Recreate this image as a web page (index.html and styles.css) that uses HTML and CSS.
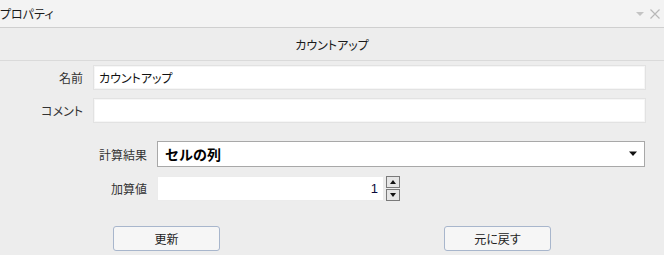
FILE: index.html
```html
<!DOCTYPE html>
<html lang="ja">
<head>
<meta charset="utf-8">
<link rel="stylesheet" href="styles.css">
</head>
<body>
<div class="panel">
  <div class="titlebar">
    <span class="title">プロパティ</span>
    <span class="tools">
      <svg width="10" height="8" viewBox="0 0 10 8"><path d="M1 2 L9 2 L5 6 Z" fill="#c4c4c4"/></svg>
      <svg width="12" height="12" viewBox="0 0 12 12"><path d="M1.5 1.5 L10.5 10.5 M10.5 1.5 L1.5 10.5" stroke="#b8b8b8" stroke-width="1.2"/></svg>
    </span>
  </div>
  <div class="body">
    <div class="header">カウントアップ</div>
    <div class="form1">
      <label class="lbl">名前</label>
      <div class="input">カウントアップ</div>
      <label class="lbl">コメント</label>
      <div class="input"></div>
    </div>
    <div class="form2">
      <label class="lbl">計算結果</label>
      <div class="select"><span>セルの列</span>
        <svg width="10" height="6" viewBox="0 0 10 6"><path d="M1 0.5 L9 0.5 L5 5 Z" fill="#111"/></svg>
      </div>
      <label class="lbl">加算値</label>
      <div class="spinrow">
        <div class="spin">1</div>
        <div class="spinbtns">
          <div class="sb"><svg width="6" height="4" viewBox="0 0 6 4"><path d="M0 4 L6 4 L3 0 Z" fill="#111"/></svg></div>
          <div class="sb"><svg width="6" height="4" viewBox="0 0 6 4"><path d="M0 0 L6 0 L3 4 Z" fill="#111"/></svg></div>
        </div>
      </div>
    </div>
    <div class="buttons">
      <button class="btn">更新</button>
      <button class="btn">元に戻す</button>
    </div>
  </div>
</div>
</body>
</html>
```
FILE: styles.css
```css
html, body { margin: 0; padding: 0; }
body {
  width: 664px; height: 255px; overflow: hidden;
  background: #ededed;
  font-family: "Noto Sans CJK JP", "Noto Sans", sans-serif;
  font-feature-settings: "palt";
  font-size: 12px; color: #222;
}
.titlebar {
  height: 28px; box-sizing: border-box;
  background: #f3f3f3;
  border-bottom: 1px solid #cfcfcf;
  display: flex; align-items: center; justify-content: space-between;
}
.title { font-size: 12px; color: #1a1a1a; }
.tools { display: flex; align-items: center; gap: 4px; padding-right: 3px; }
.body { background: #ededed; }
.header {
  height: 33px; box-sizing: border-box;
  display: flex; align-items: center; justify-content: center;
  border-bottom: 1px solid #dadada;
  font-size: 12px; color: #1a1a1a;
}
.form1 {
  display: grid;
  grid-template-columns: 83px 553px;
  column-gap: 10px;
  row-gap: 8px;
  padding-top: 4px;
}
.lbl { display: flex; align-items: center; justify-content: flex-end; font-size: 12px; color: #333; }
.input {
  height: 25px; box-sizing: border-box;
  background: #fff;
  border: 1px solid #e2e2e2;
  box-shadow: inset 0 0 0 1px #f6f6f6;
  display: flex; align-items: center; padding-left: 5px;
  font-size: 12px; color: #111;
}
.form2 {
  display: grid;
  grid-template-columns: 147px auto;
  column-gap: 10px;
  row-gap: 9px;
  padding-top: 18px;
  padding-right: 19px;
}
.select {
  height: 26px; box-sizing: border-box;
  background: #fff;
  border: 1px solid #a8a8a8;
  display: flex; align-items: center; justify-content: space-between;
  padding: 0 6px 0 7px;
  font-size: 14px; font-weight: bold; color: #000;
  font-feature-settings: normal;
}
.spinrow { display: flex; gap: 2px; align-items: stretch; height: 25px; }
.spin {
  width: 227px; box-sizing: border-box;
  background: #fff; border: 1px solid #ececec;
  display: flex; align-items: center; justify-content: flex-end;
  padding-right: 5px; font-size: 13px; color: #0a0a3a;
  font-family: "Liberation Sans", sans-serif;
}
.spinbtns { display: flex; flex-direction: column; width: 14px; gap: 1px; }
.sb {
  flex: 1; box-sizing: border-box;
  border: 1px solid #7a7a7a; background: #e6e6e6;
  display: flex; align-items: center; justify-content: center;
}
.buttons {
  display: flex; padding-top: 25px; padding-left: 113px; gap: 224px;
}
.btn {
  width: 107px; height: 25px; box-sizing: border-box;
  border: 1px solid #a8b6cc; border-radius: 3px;
  background: #f6f6f6;
  font-family: "Noto Sans CJK JP", sans-serif; font-feature-settings: "palt";
  font-size: 12px; color: #222;
  padding: 0;
}
```
